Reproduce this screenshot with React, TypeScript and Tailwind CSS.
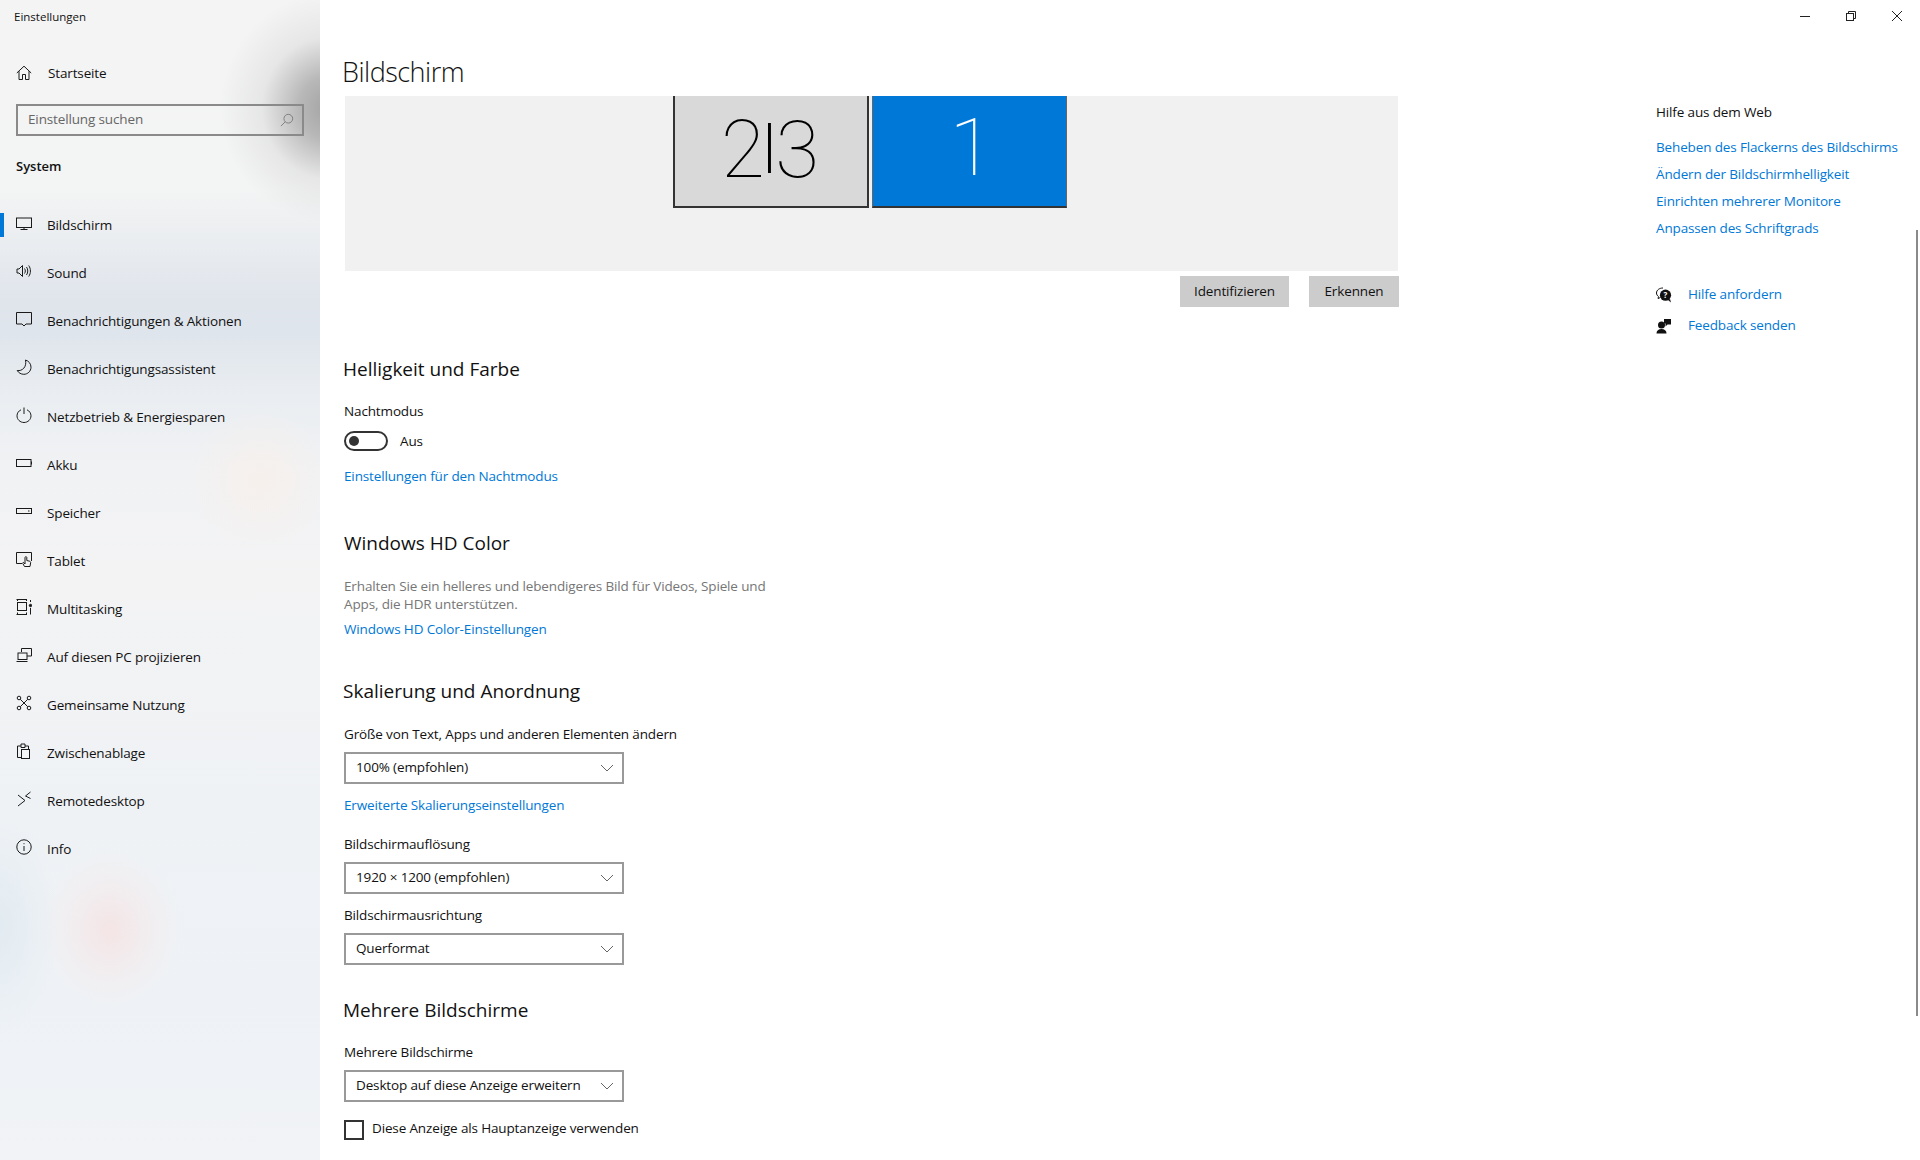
import type { ReactNode } from "react";

const font = "font-['Open_Sans','Noto_Sans',sans-serif]";
// body copy size used all over the settings page
const body = "text-[13.5px] tracking-[-0.14px]";

function Ico({ children, className = "" }: { children: ReactNode; className?: string }) {
  return (
    <svg viewBox="0 0 16 16" fill="none" stroke="#1a1a1a" strokeWidth="1" className={`w-4 h-4 shrink-0 ${className}`}>
      {children}
    </svg>
  );
}

const navItems: { label: string; icon: ReactNode; active?: boolean }[] = [
  {
    label: "Bildschirm",
    active: true,
    icon: (
      <>
        <rect x="0.5" y="3" width="15" height="9.5" />
        <path d="M8 12.5V14.5M4.5 14.5H11.5" />
      </>
    ),
  },
  {
    label: "Sound",
    icon: (
      <>
        <path d="M1 6H3L6.5 2.5V13.5L3 10H1Z" />
        <path d="M8.5 5.5C9.6 7 9.6 9 8.5 10.5M10.5 4C12.2 6.3 12.2 9.7 10.5 12M12.7 2.5C15 5.7 15 10.3 12.7 13.5" />
      </>
    ),
  },
  {
    label: "Benachrichtigungen & Aktionen",
    icon: <path d="M0.5 1.5H15.5V13H10L8 15L6 13H0.5Z" />,
  },
  {
    label: "Benachrichtigungsassistent",
    icon: <path d="M9.5 1C12.8 2 15 4.8 15 8.2C15 12.2 11.7 15.3 7.8 15.3C5 15.3 2.6 13.8 1.2 11.5C6.2 12.4 11 8 9.5 1Z" />,
  },
  {
    label: "Netzbetrieb & Energiesparen",
    icon: (
      <>
        <path d="M8 0.5V7" />
        <path d="M5 2.8C2.6 3.9 1 6.2 1 8.8C1 12.5 4.1 15.5 8 15.5C11.9 15.5 15 12.5 15 8.8C15 6.2 13.4 3.9 11 2.8" />
      </>
    ),
  },
  {
    label: "Akku",
    icon: (
      <>
        <rect x="0.5" y="4.5" width="14.5" height="7" />
        <path d="M15.5 6.5V9.5" />
      </>
    ),
  },
  {
    label: "Speicher",
    icon: (
      <>
        <rect x="0.5" y="5.5" width="15" height="5" />
        <path d="M12 8H13.5" />
      </>
    ),
  },
  {
    label: "Tablet",
    icon: (
      <>
        <path d="M6 12.5H0.5V1.5H15.5V10" />
        <path d="M8.5 15.5L6.8 12.5C6.4 11.6 7.4 11 8 11.8L9 13V6.5C9 5.4 10.8 5.4 10.8 6.5V9.5L13.5 10.2C14.4 10.5 14.8 11 14.6 12L14 15.5Z" fill="#f2f4f6" />
      </>
    ),
  },
  {
    label: "Multitasking",
    icon: (
      <>
        <path d="M0.5 0.5H11M0.5 15.5H11" />
        <rect x="1.5" y="3.5" width="9" height="8" />
        <path d="M1.5 13.5V15.5M10.5 13.5V15.5M1.5 0.5V2M10.5 0.5V2" />
        <path d="M14.5 1V3M14.5 9V15.5" />
        <circle cx="14.5" cy="6.5" r="1.2" fill="#1a1a1a" />
      </>
    ),
  },
  {
    label: "Auf diesen PC projizieren",
    icon: (
      <>
        <path d="M5.5 5V1.5H15.5V9H11" />
        <rect x="2" y="6" width="9" height="6.5" fill="#f2f4f6" />
        <path d="M0.5 14.5H11.5" />
      </>
    ),
  },
  {
    label: "Gemeinsame Nutzung",
    icon: (
      <>
        <circle cx="3" cy="3" r="1.8" />
        <circle cx="13" cy="3" r="1.8" />
        <circle cx="3" cy="13" r="1.8" />
        <circle cx="13" cy="13" r="1.8" />
        <path d="M4.3 4.3L11.7 11.7M11.7 4.3L4.3 11.7" />
      </>
    ),
  },
  {
    label: "Zwischenablage",
    icon: (
      <>
        <path d="M5.5 14.5H1.5V3H5V1H9V3H12.5V6" />
        <path d="M5 3V4.5H9V3" />
        <rect x="5.5" y="6.5" width="8" height="9" fill="#f2f4f6" />
      </>
    ),
  },
  {
    label: "Remotedesktop",
    icon: <path d="M2 4L9 9.5L2 15M14.5 1L9.5 5L14.5 7.5" />,
  },
  {
    label: "Info",
    icon: (
      <>
        <circle cx="8" cy="8" r="7.2" />
        <path d="M8 7V12" />
        <path d="M8 4.2V5.2" />
      </>
    ),
  },
];

function Sidebar() {
  return (
    <aside className="w-80 h-[1160px] shrink-0 overflow-hidden text-[#111] bg-[radial-gradient(ellipse_110px_115px_at_330px_108px,#a2a2a2_0%,#b8b8b8_28%,#dcdcdc90_62%,#f0f0f000_100%),radial-gradient(ellipse_70px_80px_at_110px_930px,#f6e0e0c0_0%,#f5e8e870_55%,#f0f0f000_100%),radial-gradient(ellipse_60px_110px_at_0px_925px,#e2ebf1_0%,#e2ebf100_100%),radial-gradient(ellipse_70px_70px_at_260px_480px,#f6f0ec_0%,#f4f0f000_100%),linear-gradient(to_bottom,#f4f4f4_0px,#f3f4f4_190px,#e0e5ec_300px,#dfe5ec_335px,#e9edf1_390px,#f1f2f4_470px,#f3f3f4_580px,#eff2f5_800px,#eef2f6_1000px,#f1f3f6_1160px)]">
      <div className="h-[34px] pl-[14px] text-[11.5px] leading-[34px]">Einstellungen</div>
      <div className="mt-[15px] h-12 pl-4 flex items-center">
        <Ico className="-mt-px">
          <path d="M0.8 8L8 1.2L15.2 8M3 6.2V14.5H6.5V9.5H9.5V14.5H13V6.2" />
        </Ico>
        <span className={`ml-4 ${body}`}>Startseite</span>
      </div>
      <div className={`mt-[7px] mx-4 w-72 h-8 border-2 border-[#8a8a8a] flex items-center pl-[10px] pr-2 text-[#666] justify-between ${body}`}>
        <span className="-mt-px">Einstellung suchen</span>
        <svg viewBox="0 0 16 16" fill="none" stroke="#777" strokeWidth="1" className="w-3.5 h-3.5">
          <circle cx="9.5" cy="6.5" r="5" />
          <path d="M6 10L1 15" />
        </svg>
      </div>
      <div className="mt-[18px] h-6 pl-4 text-[13px] leading-6 font-semibold">System</div>
      <nav className="mt-[23px]">
        {navItems.map((item) => (
          <div key={item.label} className="h-12 flex items-center">
            <div className={`w-1 h-6 ${item.active ? "bg-[#0078d7]" : ""}`} />
            <Ico className="ml-3 -mt-1">{item.icon}</Ico>
            <span className={`ml-[15px] ${body}`}>{item.label}</span>
          </div>
        ))}
      </nav>
    </aside>
  );
}

function Heading({ children, className }: { children: ReactNode; className: string }) {
  return <h2 className={`h-7 -ml-px text-[19px] leading-[27px] ${className}`}>{children}</h2>;
}

function Label({ children, className }: { children: ReactNode; className: string }) {
  return <div className={`h-5 leading-[19px] ${body} ${className}`}>{children}</div>;
}

function LinkText({ children, className }: { children: ReactNode; className: string }) {
  return <div className={`h-5 leading-[19px] text-[#0078d7] ${body} ${className}`}>{children}</div>;
}

function Select({ value }: { value: string }) {
  return (
    <div className={`mt-[7px] w-[280px] h-8 border-2 border-[#999] flex items-center justify-between pl-[10px] pr-2 ${body}`}>
      <span className="-mt-px">{value}</span>
      <svg viewBox="0 0 14 8" fill="none" stroke="#666" strokeWidth="1" className="w-[14px] h-2">
        <path d="M1 1L7 7L13 1" />
      </svg>
    </div>
  );
}

function Content() {
  return (
    <main className="w-[1016px] shrink-0 pl-6">
      <h1 className="mt-[52px] -ml-0.5 h-10 text-[27px] tracking-[-0.5px] leading-10 font-light">Bildschirm</h1>

      <div className="mt-1 ml-px w-[1053px] h-[175px] bg-[#f1f1f1] pl-[328px] flex items-start gap-[3px]">
        <div className="w-[196px] h-[112px] border-x-2 border-b-2 border-[#333] bg-[#d9d9d9] flex items-baseline justify-center pt-[2px] pr-[4px] font-['Roboto',sans-serif] font-thin text-[80px] leading-[104px] text-black tracking-[-2px]">
          <span>2</span>
          <span className="text-[60px] font-light -translate-y-3 tracking-[-1px]">|</span>
          <span>3</span>
        </div>
        <div className="w-[195px] h-[112px] border-x border-[#666] border-b-2 border-b-[#333] bg-[#0078d7] flex items-center justify-center pb-[6px] pl-1 font-['Roboto',sans-serif] font-thin text-[80px] text-white">
          1
        </div>
      </div>

      <div className={`mt-[5px] ml-px w-[1054px] flex justify-end gap-5 ${body}`}>
        <div className="w-[109px] h-[31px] bg-[#ccc] flex items-center justify-center">Identifizieren</div>
        <div className="w-[90px] h-[31px] bg-[#ccc] flex items-center justify-center">Erkennen</div>
      </div>

      <Heading className="mt-[49px]">Helligkeit und Farbe</Heading>
      <Label className="mt-[18px]">Nachtmodus</Label>
      <div className="mt-[9px] h-5 flex items-center">
        <div className="w-11 h-5 rounded-full border-2 border-[#333] flex items-center pl-[3px]">
          <div className="w-[10px] h-[10px] rounded-full bg-[#333]" />
        </div>
        <span className={`ml-3 ${body}`}>Aus</span>
      </div>
      <LinkText className="mt-4">Einstellungen für den Nachtmodus</LinkText>

      <Heading className="mt-[43px] ml-0">Windows HD Color</Heading>
      <p className={`mt-[19px] w-[440px] leading-[18px] text-[#767676] ${body}`}>
        Erhalten Sie ein helleres und lebendigeres Bild für Videos, Spiele und Apps, die HDR unterstützen.
      </p>
      <LinkText className="mt-[7px]">Windows HD Color-Einstellungen</LinkText>

      <Heading className="mt-[38px]">Skalierung und Anordnung</Heading>
      <Label className="mt-[19px]">Größe von Text, Apps und anderen Elementen ändern</Label>
      <Select value="100% (empfohlen)" />
      <LinkText className="mt-3">Erweiterte Skalierungseinstellungen</LinkText>
      <Label className="mt-[19px]">Bildschirmauflösung</Label>
      <Select value="1920 × 1200 (empfohlen)" />
      <Label className="mt-3">Bildschirmausrichtung</Label>
      <Select value="Querformat" />

      <Heading className="mt-8">Mehrere Bildschirme</Heading>
      <Label className="mt-[18px]">Mehrere Bildschirme</Label>
      <Select value="Desktop auf diese Anzeige erweitern" />
      <div className="mt-[18px] h-5 flex items-center">
        <div className="w-5 h-5 border-2 border-[#333]" />
        <span className={`ml-2 -mt-[3px] ${body}`}>Diese Anzeige als Hauptanzeige verwenden</span>
      </div>
    </main>
  );
}

function HelpPanel() {
  const links = [
    "Beheben des Flackerns des Bildschirms",
    "Ändern der Bildschirmhelligkeit",
    "Einrichten mehrerer Monitore",
    "Anpassen des Schriftgrads",
  ];
  return (
    <section className="ml-[320px] w-[264px] shrink-0">
      <div className="mt-[11px] ml-[144px] flex gap-9">
        <svg viewBox="0 0 10 10" stroke="#222" strokeWidth="1" className="w-[10px] h-[10px]">
          <path d="M0 5.5H10" />
        </svg>
        <svg viewBox="0 0 10 10" fill="none" stroke="#222" strokeWidth="1" className="w-[10px] h-[10px]">
          <rect x="0.5" y="2.5" width="7" height="7" />
          <path d="M2.5 2.5V0.5H9.5V7.5H7.5" />
        </svg>
        <svg viewBox="0 0 10 10" stroke="#222" strokeWidth="1" className="w-[10px] h-[10px]">
          <path d="M0 0L10 10M10 0L0 10" />
        </svg>
      </div>
      <div className={`mt-[81px] h-5 leading-5 ${body}`}>Hilfe aus dem Web</div>
      <div className="mt-3">
        {links.map((link) => (
          <div key={link} className={`h-[27px] leading-[26px] text-[#0078d7] whitespace-nowrap ${body}`}>
            {link}
          </div>
        ))}
      </div>
      <div className="mt-[37px]">
        <div className="h-[31px] flex items-center">
          <svg viewBox="0 0 16 16" className="w-4 h-4 shrink-0">
            <path d="M7 1C3.2 1 .5 3.2.5 6C.5 7.5 1.3 8.7 2.5 9.6L2 11.5L4.5 10.5" fill="none" stroke="#111" />
            <circle cx="9.5" cy="8.2" r="5.6" fill="#111" />
            <path d="M12 13L15 15.5L14 12Z" fill="#111" />
            <text x="9.5" y="11" textAnchor="middle" fontSize="8" fontWeight="700" fill="#fff" fontFamily="Open Sans, sans-serif">?</text>
          </svg>
          <span className={`ml-4 text-[#0078d7] ${body}`}>Hilfe anfordern</span>
        </div>
        <div className="h-[31px] flex items-center">
          <svg viewBox="0 0 16 16" className="w-4 h-4 shrink-0" fill="#111">
            <circle cx="5.5" cy="7" r="3.5" />
            <path d="M0.5 15.5C0.5 12.5 2.5 11 5.5 11C8.5 11 10.5 12.5 10.5 15.5Z" />
            <path d="M8 1H15V6.5H11.5L9.5 8.5V5.5H8Z" />
          </svg>
          <span className={`ml-4 text-[#0078d7] ${body}`}>Feedback senden</span>
        </div>
      </div>
    </section>
  );
}

export default function App() {
  return (
    <div className={`relative w-[1920px] h-[1160px] overflow-hidden flex bg-white text-[#111] ${font}`}>
      <Sidebar />
      <Content />
      <HelpPanel />
      {/* scrollbar sits over the page edge */}
      <div className="absolute right-[2px] top-[230px] w-[2px] h-[786px] bg-[#8a8a8a]" />
    </div>
  );
}
